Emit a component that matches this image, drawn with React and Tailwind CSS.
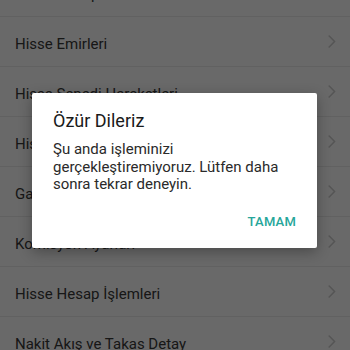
const rows = [
  "Hisse Hesap Özeti",
  "Hisse Emirleri",
  "Hisse Senedi Hareketleri",
  "Hisse Portföy Detayı",
  "Garanti Bilgileri",
  "Komisyon Ayarları",
  "Hisse Hesap İşlemleri",
  "Nakit Akış ve Takas Detay",
];

function Chevron() {
  return (
    <svg width="8" height="13" viewBox="0 0 8 13" fill="none" aria-hidden="true">
      <path
        d="M1.2 1 L6.6 6.5 L1.2 12"
        stroke="#cfcfcf"
        strokeWidth="1.6"
        strokeLinecap="round"
        strokeLinejoin="round"
      />
    </svg>
  );
}

function MenuList() {
  return (
    <ul className="-mt-[33px] bg-white">
      {rows.map((label) => (
        <li
          key={label}
          className="flex h-[50px] items-center justify-between border-b border-[#ececec] pr-[14px] pl-[15px]"
        >
          <span className="pt-[5px] text-[15px] text-[#383838]">{label}</span>
          <Chevron />
        </li>
      ))}
    </ul>
  );
}

function SorryDialog() {
  return (
    <div className="absolute inset-0 bg-black/[0.59]">
      <div className="mt-[93px] ml-[32px] flex w-[285px] flex-col rounded-[2px] bg-white shadow-[0_4px_14px_rgba(0,0,0,0.3)]">
        <h2 className="px-[21px] pt-4 text-[18px] leading-[24px] text-[#1a1a1a]">
          Özür Dileriz
        </h2>
        <p className="mt-2 px-[21px] text-[15px] leading-[17.5px] text-[#2a2a2a]">
          Şu anda işleminizi gerçekleştiremiyoruz. Lütfen daha sonra tekrar
          deneyin.
        </p>
        <div className="mt-[10px] flex justify-end pr-[13px] pb-2">
          <button className="h-9 px-2 text-[13px] font-medium tracking-[0.2px] text-[#26a69a]">
            TAMAM
          </button>
        </div>
      </div>
    </div>
  );
}

export default function App() {
  return (
    <div
      className="relative h-[350px] w-[350px] overflow-hidden bg-white"
      style={{ fontFamily: "Roboto, 'Noto Sans', sans-serif" }}
    >
      <MenuList />
      <SorryDialog />
    </div>
  );
}
